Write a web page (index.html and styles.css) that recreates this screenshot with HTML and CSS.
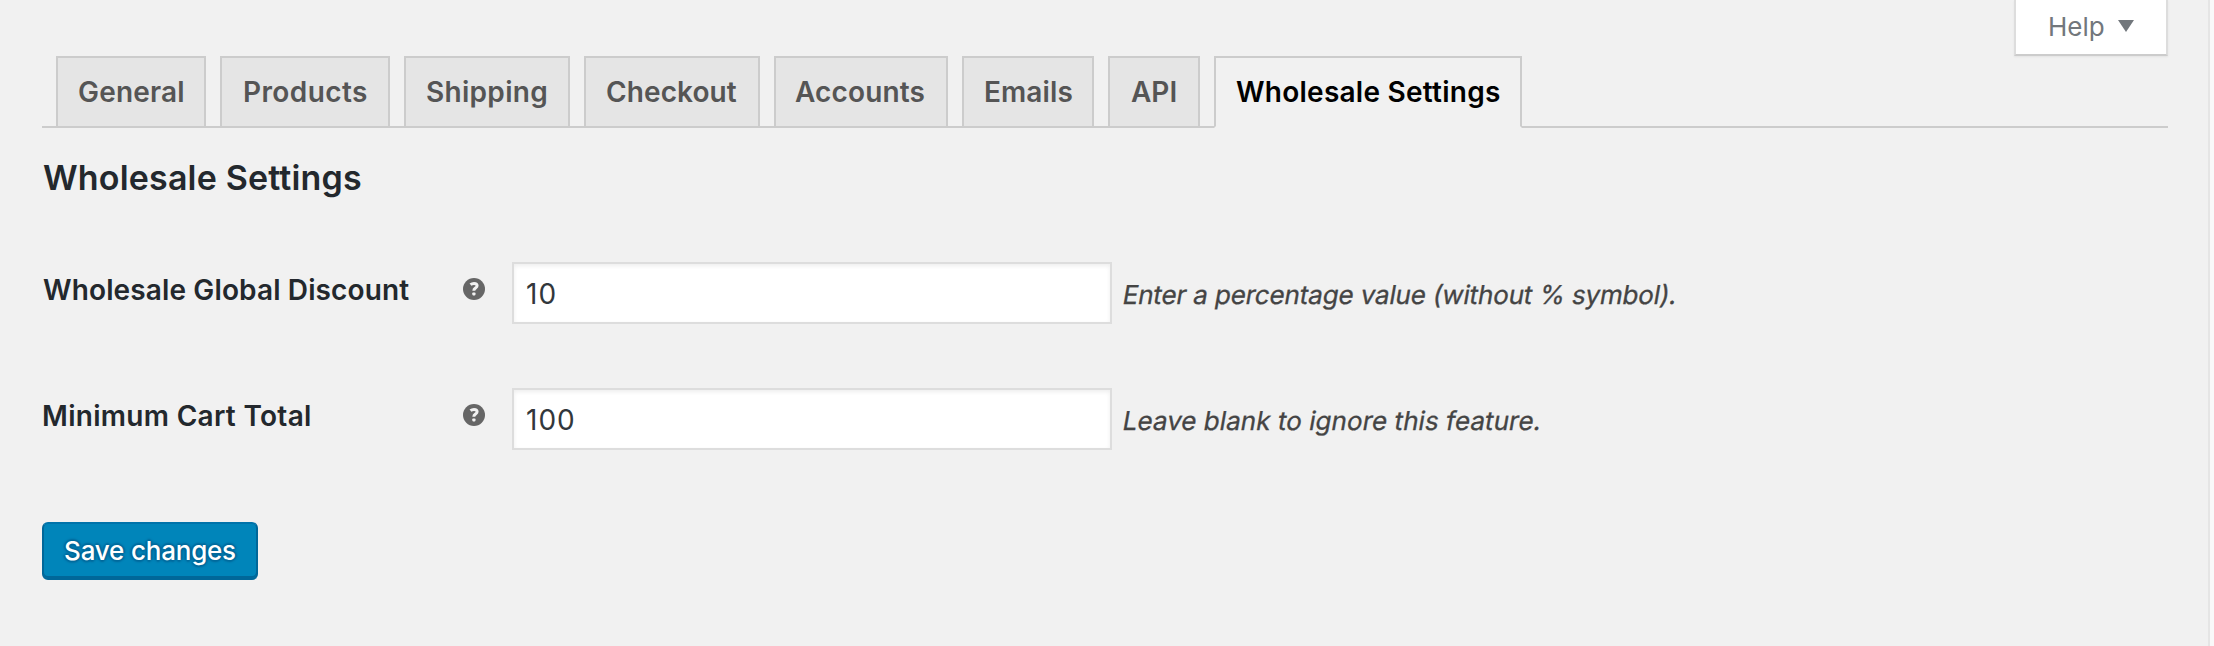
FILE: index.html
```html
<!DOCTYPE html>
<html lang="en">
<head>
<meta charset="utf-8">
<title>Wholesale Settings</title>
<link rel="stylesheet" href="styles.css">
</head>
<body>
<div class="page">
  <header class="screen-meta">
    <button class="help" type="button">Help <svg class="arrow" viewBox="0 0 16 12"><path d="M0 0h16L8 12z"/></svg></button>
  </header>
  <nav class="tabs">
    <a class="tab general">General</a>
    <a class="tab products">Products</a>
    <a class="tab shipping">Shipping</a>
    <a class="tab checkout">Checkout</a>
    <a class="tab accounts">Accounts</a>
    <a class="tab emails">Emails</a>
    <a class="tab api">API</a>
    <a class="tab wholesale active">Wholesale Settings</a>
  </nav>
  <h2 class="title">Wholesale Settings</h2>
  <form class="form">
    <div class="row">
      <label class="label" for="discount">Wholesale Global Discount</label>
      <svg class="tip" viewBox="0 0 22 22"><circle cx="11" cy="11" r="11"/><path d="M7.5 6.7C8.6 5.8 9.8 5.5 11 5.5c2 0 3.1.9 3.1 2.3 0 2.4-3.3 2.2-3.3 4.9"/><rect x="9.3" y="14.4" width="3.2" height="3" rx=".8"/></svg>
      <input class="input" id="discount" type="text" value="10">
      <span class="description percent">Enter a percentage value (without % symbol).</span>
    </div>
    <div class="row">
      <label class="label minimum" for="minimum">Minimum Cart Total</label>
      <svg class="tip" viewBox="0 0 22 22"><circle cx="11" cy="11" r="11"/><path d="M7.5 6.7C8.6 5.8 9.8 5.5 11 5.5c2 0 3.1.9 3.1 2.3 0 2.4-3.3 2.2-3.3 4.9"/><rect x="9.3" y="14.4" width="3.2" height="3" rx=".8"/></svg>
      <input class="input" id="minimum" type="text" value="100">
      <span class="description">Leave blank to ignore this feature.</span>
    </div>
    <button class="save" type="button">Save changes</button>
  </form>
</div>
</body>
</html>
```
FILE: styles.css
```css
* { box-sizing: border-box; }
body {
  margin: 0;
  background: #f9f9f9;
  color: #23282d;
  font-family: Inter, "Liberation Sans", sans-serif;
  font-variant-ligatures: none;
  font-feature-settings: "calt" 0;
  overflow: hidden;
}
.page {
  width: 2210px;
  height: 646px;
  padding: 0 40px 0 42px;
  border-right: 2px solid #e5e5e5;
  background: #f1f1f1;
}
.screen-meta {
  display: flex;
  justify-content: flex-end;
  height: 56px;
}
.help {
  display: flex;
  align-items: flex-start;
  width: 154px;
  height: 56px;
  padding: 10px 0 0 32px;
  border: solid #ddd;
  border-width: 0 2px 2px;
  border-bottom-color: #ccc;
  background: #fff;
  box-shadow: 0 1px 2px rgba(0, 0, 0, .06);
  color: #72777c;
  font: 400 26px/34px Inter, sans-serif;
}
.arrow {
  width: 16px;
  height: 12px;
  margin: 10px 0 0 13px;
  fill: #72777c;
}
.tabs {
  display: flex;
  gap: 14px;
  height: 72px;
  padding-left: 14px;
  border-bottom: 2px solid #ccc;
}
.tab {
  height: 70px;
  padding: 10px 0 0 20px;
  border: 2px solid #ccc;
  border-bottom: 0;
  background: #e5e5e5;
  color: #555;
  font-size: 28px;
  font-weight: 600;
  line-height: 48px;
  white-space: nowrap;
}
.general { width: 150px; letter-spacing: .2px; }
.products { width: 170px; padding-left: 21px; letter-spacing: .4px; }
.shipping { width: 166px; letter-spacing: .3px; }
.checkout { width: 176px; letter-spacing: .1px; }
.accounts { width: 174px; padding-left: 19px; letter-spacing: .15px; }
.emails { width: 132px; letter-spacing: .1px; }
.api { width: 92px; padding-left: 21px; }
.wholesale { width: 308px; letter-spacing: .25px; }
.tab.active {
  height: 72px;
  border-bottom: 2px solid #f1f1f1;
  background: #f1f1f1;
  color: #000;
}
.title {
  margin: 30px 0 0;
  padding-left: 1px;
  font-size: 34px;
  font-weight: 600;
  line-height: 40px;
  letter-spacing: .17px;
}
.form {
  display: flex;
  flex-direction: column;
  align-items: flex-start;
  gap: 64px;
  padding-top: 64px;
}
.row {
  display: flex;
  height: 62px;
}
.label {
  width: 421px;
  padding: 8px 0 0 1px;
  font-size: 28px;
  font-weight: 600;
  line-height: 40px;
  letter-spacing: .13px;
}
.label.minimum {
  padding-left: 0;
  letter-spacing: .3px;
}
.tip {
  width: 22px;
  height: 22px;
  margin: 16px 27px 0 0;
  fill: #666;
}
.tip path {
  fill: none;
  stroke: #f1f1f1;
  stroke-width: 3;
}
.tip rect { fill: #f1f1f1; }
.input {
  width: 600px;
  height: 62px;
  padding: 2px 12px 0;
  border: 2px solid #ddd;
  border-radius: 0;
  background: #fff;
  box-shadow: inset 0 2px 4px rgba(0, 0, 0, .07);
  color: #32373c;
  font: 400 28px Inter, sans-serif;
  letter-spacing: 1px;
}
/* Slanted upright letterforms rather than the cursive italic ones */
.description {
  height: 40px;
  margin: 13px 0 0 11px;
  color: #444;
  font-size: 26px;
  line-height: 40px;
  letter-spacing: .05px;
  white-space: nowrap;
  transform: skewX(-10deg);
  -webkit-text-stroke: .3px #444;
}
.description.percent { letter-spacing: -.15px; }
.save {
  width: 216px;
  height: 58px;
  margin-top: 8px;
  padding: 0 0 2px;
  border: 2px solid;
  border-color: #0073aa #006799 #006799;
  border-radius: 6px;
  background: #0085ba;
  box-shadow: inset 0 -2px 0 #006799;
  color: #fff;
  font: 500 26px Inter, sans-serif;
  letter-spacing: -.2px;
  text-shadow: 0 -2px 2px #006799, 2px 0 2px #006799, 0 2px 2px #006799, -2px 0 2px #006799;
}
```
